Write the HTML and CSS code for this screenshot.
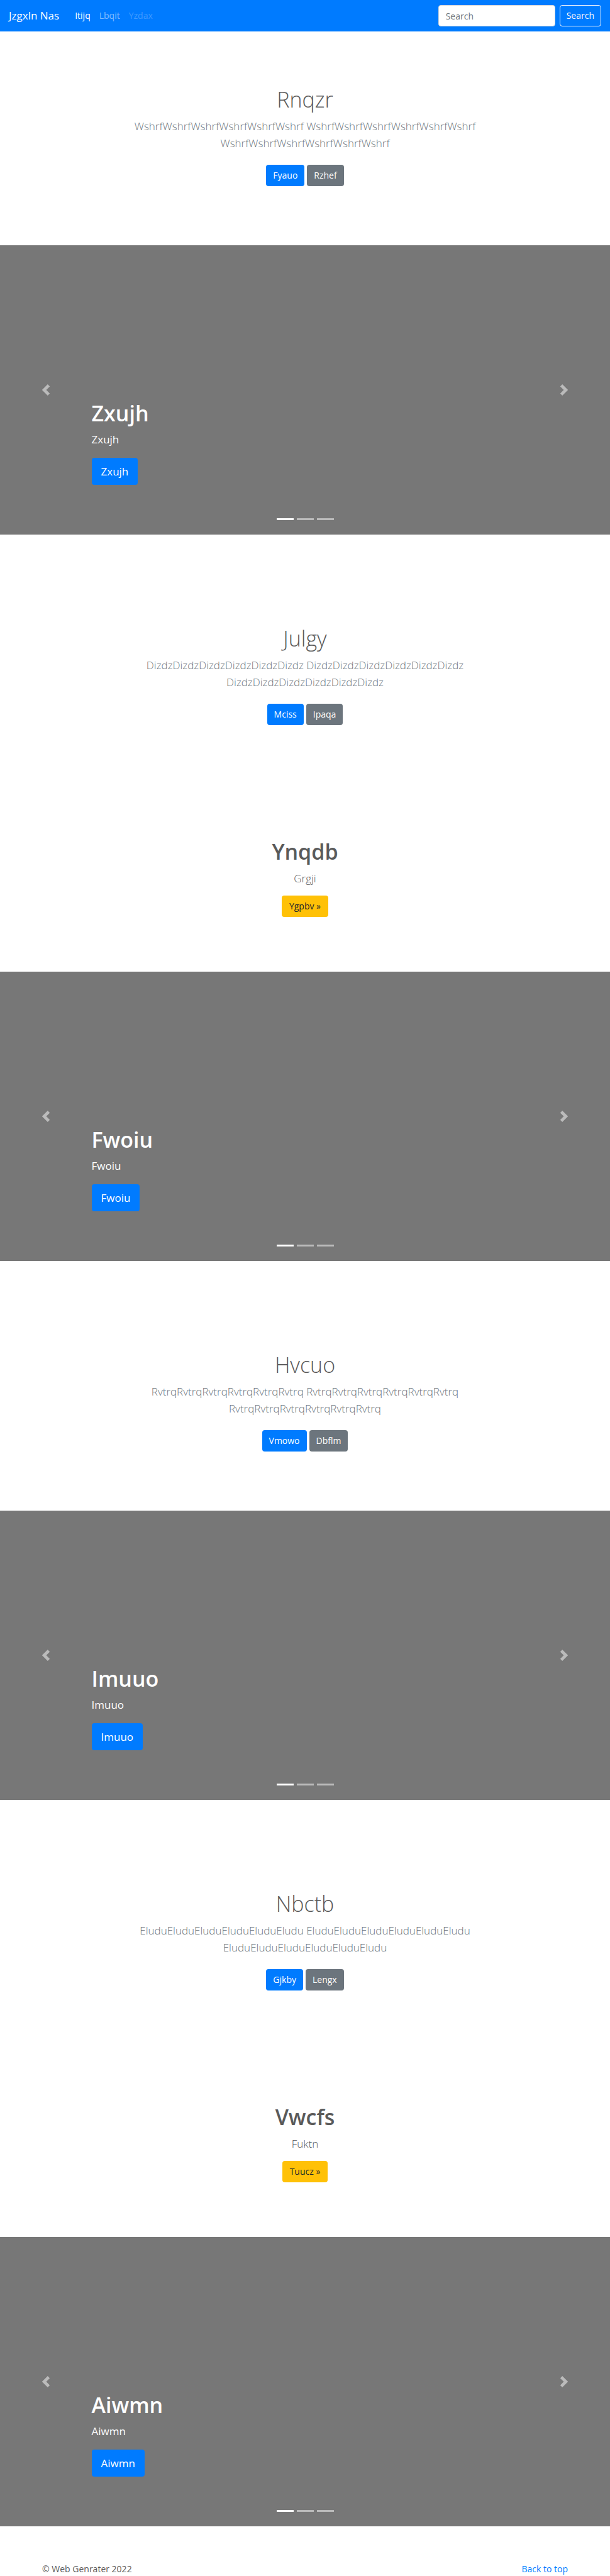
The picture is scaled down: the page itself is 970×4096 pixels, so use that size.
FILE: index.html
```html
<!DOCTYPE html>
<html lang="en">
<head>
<meta charset="utf-8">
<meta name="viewport" content="width=device-width, initial-scale=1">
<title>Jzgxln Nas</title>
<link rel="stylesheet" href="styles.css">
</head>
<body>
<header class="navbar" id="top">
  <a class="brand" href="#">Jzgxln Nas</a>
  <nav class="nav-links">
    <a class="nav-link active" href="#">Itijq</a>
    <a class="nav-link" href="#">Lbqit</a>
    <a class="nav-link disabled" href="#">Yzdax</a>
  </nav>
  <form class="search">
    <input class="search-input" type="search" placeholder="Search" aria-label="Search">
    <button class="search-btn" type="submit">Search</button>
  </form>
</header>
<main>
  <section class="hero">
    <h1 class="hero-title">Rnqzr</h1>
    <p class="lead muted">WshrfWshrfWshrfWshrfWshrfWshrf WshrfWshrfWshrfWshrfWshrfWshrf WshrfWshrfWshrfWshrfWshrfWshrf</p>
    <div class="actions">
      <a class="btn primary" href="#">Fyauo</a>
      <a class="btn secondary" href="#">Rzhef</a>
    </div>
  </section>

  <section class="carousel">
    <div class="caption">
      <h2 class="title">Zxujh</h2>
      <p class="caption-text">Zxujh</p>
      <a class="btn primary large" href="#">Zxujh</a>
    </div>
    <button class="control prev" type="button" aria-label="Previous"><svg class="chevron" viewBox="0 0 8 8"><path d="M5.25 0l-4 4 4 4 1.5-1.5L4.25 4l2.5-2.5L5.25 0z"/></svg></button>
    <button class="control next" type="button" aria-label="Next"><svg class="chevron" viewBox="0 0 8 8"><path d="M2.75 0l-1.5 1.5L3.75 4l-2.5 2.5L2.75 8l4-4-4-4z"/></svg></button>
    <div class="indicators"><span class="dot current"></span><span class="dot"></span><span class="dot"></span></div>
  </section>

  <section class="hero">
    <h1 class="hero-title">Julgy</h1>
    <p class="lead muted">DizdzDizdzDizdzDizdzDizdzDizdz DizdzDizdzDizdzDizdzDizdzDizdz DizdzDizdzDizdzDizdzDizdzDizdz</p>
    <div class="actions">
      <a class="btn primary" href="#">Mciss</a>
      <a class="btn secondary" href="#">Ipaqa</a>
    </div>
  </section>

  <section class="promo">
    <h2 class="title">Ynqdb</h2>
    <p class="lead">Grgji</p>
    <a class="btn warning" href="#">Ygpbv »</a>
  </section>

  <section class="carousel">
    <div class="caption">
      <h2 class="title">Fwoiu</h2>
      <p class="caption-text">Fwoiu</p>
      <a class="btn primary large" href="#">Fwoiu</a>
    </div>
    <button class="control prev" type="button" aria-label="Previous"><svg class="chevron" viewBox="0 0 8 8"><path d="M5.25 0l-4 4 4 4 1.5-1.5L4.25 4l2.5-2.5L5.25 0z"/></svg></button>
    <button class="control next" type="button" aria-label="Next"><svg class="chevron" viewBox="0 0 8 8"><path d="M2.75 0l-1.5 1.5L3.75 4l-2.5 2.5L2.75 8l4-4-4-4z"/></svg></button>
    <div class="indicators"><span class="dot current"></span><span class="dot"></span><span class="dot"></span></div>
  </section>

  <section class="hero">
    <h1 class="hero-title">Hvcuo</h1>
    <p class="lead muted">RvtrqRvtrqRvtrqRvtrqRvtrqRvtrq RvtrqRvtrqRvtrqRvtrqRvtrqRvtrq RvtrqRvtrqRvtrqRvtrqRvtrqRvtrq</p>
    <div class="actions">
      <a class="btn primary" href="#">Vmowo</a>
      <a class="btn secondary" href="#">Dbflm</a>
    </div>
  </section>

  <section class="carousel">
    <div class="caption">
      <h2 class="title">Imuuo</h2>
      <p class="caption-text">Imuuo</p>
      <a class="btn primary large" href="#">Imuuo</a>
    </div>
    <button class="control prev" type="button" aria-label="Previous"><svg class="chevron" viewBox="0 0 8 8"><path d="M5.25 0l-4 4 4 4 1.5-1.5L4.25 4l2.5-2.5L5.25 0z"/></svg></button>
    <button class="control next" type="button" aria-label="Next"><svg class="chevron" viewBox="0 0 8 8"><path d="M2.75 0l-1.5 1.5L3.75 4l-2.5 2.5L2.75 8l4-4-4-4z"/></svg></button>
    <div class="indicators"><span class="dot current"></span><span class="dot"></span><span class="dot"></span></div>
  </section>

  <section class="hero">
    <h1 class="hero-title">Nbctb</h1>
    <p class="lead muted">EluduEluduEluduEluduEluduEludu EluduEluduEluduEluduEluduEludu EluduEluduEluduEluduEluduEludu</p>
    <div class="actions">
      <a class="btn primary" href="#">Gjkby</a>
      <a class="btn secondary" href="#">Lengx</a>
    </div>
  </section>

  <section class="promo">
    <h2 class="title">Vwcfs</h2>
    <p class="lead">Fuktn</p>
    <a class="btn warning" href="#">Tuucz »</a>
  </section>

  <section class="carousel">
    <div class="caption">
      <h2 class="title">Aiwmn</h2>
      <p class="caption-text">Aiwmn</p>
      <a class="btn primary large" href="#">Aiwmn</a>
    </div>
    <button class="control prev" type="button" aria-label="Previous"><svg class="chevron" viewBox="0 0 8 8"><path d="M5.25 0l-4 4 4 4 1.5-1.5L4.25 4l2.5-2.5L5.25 0z"/></svg></button>
    <button class="control next" type="button" aria-label="Next"><svg class="chevron" viewBox="0 0 8 8"><path d="M2.75 0l-1.5 1.5L3.75 4l-2.5 2.5L2.75 8l4-4-4-4z"/></svg></button>
    <div class="indicators"><span class="dot current"></span><span class="dot"></span><span class="dot"></span></div>
  </section>
</main>
<footer class="footer">
  <span>© Web Genrater 2022</span>
  <a class="footer-link" href="#top">Back to top</a>
</footer>
</body>
</html>
```

FILE: styles.css
```css
* { box-sizing: border-box; }

body {
  margin: 0;
  background: #fff;
  color: #5a5a5a;
  font-family: "Open Sans", "Noto Sans", sans-serif;
  font-size: 14px;
  line-height: 22px;
}

h1, h2, p { margin: 0; }
a { text-decoration: none; }

.navbar {
  display: flex;
  align-items: center;
  height: 50px;
  padding: 0 14px;
  background: #007bff;
}
.brand {
  margin-right: 25px;
  color: #fff;
  font-size: 17px;
}
.nav-links {
  display: flex;
  flex: 1;
  gap: 14px;
}
.nav-link { color: rgba(255, 255, 255, .5); }
.nav-link.active { color: #fff; }
.nav-link.disabled { color: rgba(255, 255, 255, .25); }

.search {
  display: flex;
  gap: 7px;
}
.search-input, .search-btn {
  height: 34px;
  border-radius: 4px;
  font: inherit;
}
.search-input {
  width: 186px;
  padding: 0 11px;
  border: 1px solid #ced4da;
  background: #fff;
  color: #495057;
}
.search-input::placeholder {
  color: #6c757d;
  opacity: 1;
}
.search-btn {
  padding: 0 10px;
  border: 1px solid #f8f9fa;
  background: transparent;
  color: #f8f9fa;
}

.hero, .promo {
  display: flex;
  flex-direction: column;
  align-items: center;
  text-align: center;
}
.hero { padding: 87px 0 94px; }
.promo { padding: 86px 0 87px; }
.carousel + .hero, .footer { margin-top: 57px; }

.hero-title, .title {
  margin-bottom: 7px;
  font-size: 34px;
  line-height: 43px;
}
.hero-title { font-weight: 300; }
.title { font-weight: 600; }

.lead {
  max-width: 640px;
  font-size: 17px;
  font-weight: 300;
  line-height: 27px;
}
.hero .lead { margin-bottom: 21px; }
.promo .lead { margin-bottom: 14px; }
.muted { color: #6c757d; }

.actions {
  display: flex;
  gap: 4px;
}
.btn {
  display: inline-block;
  padding: 6px 11px;
  border-radius: 4px;
  color: #fff;
  line-height: 22px;
}
.primary { background: #007bff; }
.secondary { background: #6c757d; }
.warning {
  padding: 6px 12px;
  background: #ffc107;
  color: #212529;
}
.large {
  padding: 8px 15px;
  font-size: 17px;
  line-height: 27px;
}

.carousel {
  position: relative;
  display: flex;
  align-items: flex-end;
  min-height: 460px;
  padding: 0 15% 79px;
  background: #777;
  color: #fff;
}
.caption-text {
  margin-bottom: 17px;
  font-size: 17px;
  line-height: 25px;
}
.control {
  position: absolute;
  top: 0;
  bottom: 0;
  display: flex;
  align-items: center;
  justify-content: center;
  width: 15%;
  padding: 0;
  border: 0;
  background: transparent;
  opacity: .5;
}
.prev { left: 0; }
.next { right: 0; }
.chevron {
  width: 18px;
  height: 18px;
  fill: #fff;
}
.indicators {
  position: absolute;
  right: 15%;
  bottom: 23px;
  left: 15%;
  display: flex;
  justify-content: center;
  gap: 5px;
}
.dot {
  width: 27px;
  height: 3px;
  background: #fff;
  opacity: .5;
}
.dot.current { opacity: 1; }

.footer {
  display: flex;
  justify-content: space-between;
  padding: 0 67px;
}
.footer-link { color: #007bff; }
```
